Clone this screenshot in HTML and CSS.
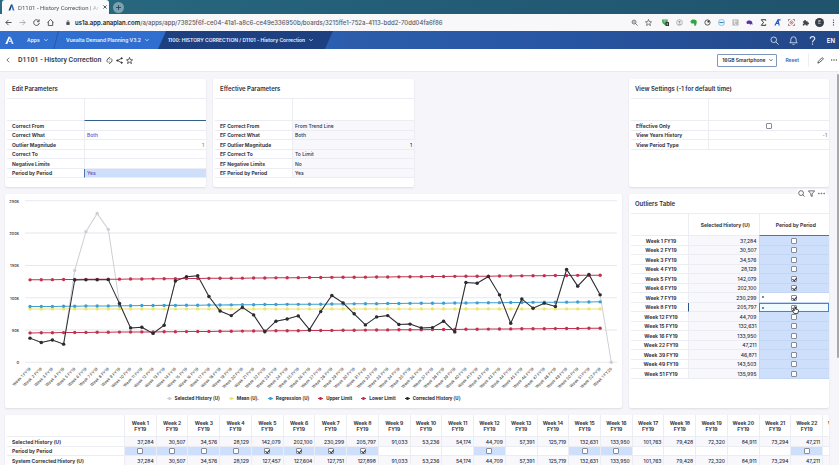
FILE: index.html
```html
<!DOCTYPE html>
<html lang="en">
<head>
<meta charset="utf-8">
<title>D1101 - History Correction | Anaplan</title>
<link rel="stylesheet" href="styles.css">
</head>
<body>
<div class="tabs">
  <div class="tab">
    <svg class="tab-logo" viewBox="0 0 14 14"><path d="M1 13 6 1h3L4.500 13z" fill="#1c3764"/><path d="M7 5 9 1l4 12h-3.500z" fill="#3f6fc4"/></svg>
    <span class="tab-title">D1101 - History Correction | An</span>
    <button class="tab-close" aria-label="Close tab"><svg viewBox="0 0 10 10"><path d="M1 1l8 8M9 1 1 9" stroke="#333" stroke-width="2"/></svg></button>
  </div>
  <button class="new-tab" aria-label="New tab"><svg viewBox="0 0 10 10"><path d="M5 0v10M0 5h10" stroke="#173d50" stroke-width="1.600"/></svg></button>
</div>

<div class="browser">
  <div class="browser-nav">
    <button aria-label="Back"><svg viewBox="0 0 16 16"><path d="M15 8H2M8 2 2 8l6 6"/></svg></button>
    <button aria-label="Forward" class="dim"><svg viewBox="0 0 16 16"><path d="M1 8h13M8 2l6 6-6 6"/></svg></button>
    <button aria-label="Reload"><svg viewBox="0 0 16 16"><path d="M13 4A6.500 6.500 0 1 0 14.500 9M14 1v5H9"/></svg></button>
    <button aria-label="Home"><svg viewBox="0 0 16 16"><path d="M1 8 8 1l7 7M3 7v8h10V7"/></svg></button>
  </div>
  <div class="address">
    <svg class="lock" viewBox="0 0 10 12"><rect x="1" y="5" width="8" height="7" fill="#444"/><path d="M3 5V3a2 2 0 0 1 4 0v2" fill="none" stroke="#444" stroke-width="1.500"/></svg>
    <span class="url"><b>us1a.app.anaplan.com</b>/a/apps/app/73825f6f-ce04-41a1-a8c6-ce49e336950b/boards/3215ffe1-752a-4113-bdd2-70dd04fa6f86</span>
  </div>
  <div class="extensions">
    <svg viewBox="0 0 16 16"><circle cx="7" cy="7" r="4.500" fill="none" stroke="#555" stroke-width="1.800"/><path d="m10 10 5 5M5 7h4" stroke="#555" stroke-width="1.800"/></svg>
    <svg class="bookmark" viewBox="0 0 16 16"><path d="m8 1 2 5 5 .5-4 3.500 1.500 5L8 12l-4.500 3L5 10 1 6.500 6 6z" fill="none" stroke="#444" stroke-width="1.500"/></svg>
    <svg viewBox="0 0 16 16"><path d="M0 1h13v8l-6 5-6-5z" fill="#3aa14c"/><path d="M3 4h7M4 7h5" stroke="#c4eccb" stroke-width="1.500"/><rect x="8" y="7" width="8" height="9" fill="#333"/><path d="M12 9v5" stroke="#fff" stroke-width="1.500"/></svg>
    <svg viewBox="0 0 16 16"><circle cx="8" cy="8" r="6.500" fill="none" stroke="#a9a9a9" stroke-width="2"/><circle cx="8" cy="6.500" r="2.500" fill="#999"/><path d="M4 13c1-4 7-4 8 0" fill="#aaa"/></svg>
    <svg viewBox="0 0 16 16"><path d="M1 5 5 1c4 0 9 0 10 3s0 9-2 11-4 0-3-2l-1-3c-4 1-8 0-8-5z" fill="#35a541"/></svg>
    <svg viewBox="0 0 16 16"><circle cx="8" cy="8" r="6" fill="none" stroke="#444" stroke-width="2"/><circle cx="10" cy="6" r="2.500" fill="#444"/></svg>
    <svg viewBox="0 0 16 16"><circle cx="8" cy="8" r="7" fill="#eaf6fc" stroke="#69acd0" stroke-width="1.500"/><path d="M3 8h10" stroke="#388abb" stroke-width="2.500"/></svg>
    <svg viewBox="0 0 16 16"><rect x="1" y="1" width="14" height="14" fill="#b9b9b9"/><path d="M6 3v8q0 2 4 1M4 5h7" fill="none" stroke="#f4f4f4" stroke-width="2"/></svg>
    <svg viewBox="0 0 16 16"><path d="M1 8c0-6 12-6 13-1l1 6-4-2-1 3-2-3C4 12 1 11 1 8z" fill="#5634a0"/></svg>
    <svg viewBox="0 0 16 16"><path d="M13 4V1.500H3L8 8l-5 6.500h10V12" fill="none" stroke="#333" stroke-width="2.200"/></svg>
    <svg viewBox="0 0 16 16"><path d="M2 15 9 2l3 13M4 10h7M10 2h5" fill="none" stroke="#2757c4" stroke-width="2.500"/></svg>
    <svg viewBox="0 0 16 16"><path d="M1 5V1h4M11 1h4v4M15 11v4h-4M5 15H1v-4" fill="none" stroke="#555" stroke-width="1.500"/><circle cx="8" cy="8" r="3.500" fill="none" stroke="#e05252" stroke-width="2"/><circle cx="8" cy="8" r="1.200" fill="#d33"/></svg>
    <svg viewBox="0 0 16 16"><path d="M2 5h3c-1-4 5-4 4 0h4v3c4-1 4 5 0 4v3H9c0-3-4-3-4 0H2v-4c3 0 3-3 0-3z" fill="#444"/></svg>
    <span class="avatar">E</span>
    <svg viewBox="0 0 16 16"><circle cx="8" cy="2.500" r="1.500" fill="#444"/><circle cx="8" cy="8" r="1.500" fill="#444"/><circle cx="8" cy="13.500" r="1.500" fill="#444"/></svg>
  </div>
</div>

<header class="appbar">
  <svg class="logo" viewBox="0 0 28 26"><path d="M1 24 11 1h6L7 24z" fill="#fff"/><path d="m15 8 3-6 9 22h-6l-2-6z" fill="#cfe0fa"/><path d="m11 18 5-5 3 5z" fill="#fff"/></svg>
  <nav class="crumbs">
    <a href="#" class="crumb crumb-apps">Apps <svg class="chev" viewBox="0 0 10 8"><path d="m1 2 4 4 4-4"/></svg></a>
    <a href="#" class="crumb crumb-model">Vuealta Demand Planning V3.2 <svg class="chev" viewBox="0 0 10 8"><path d="m1 2 4 4 4-4"/></svg></a>
    <a href="#" class="crumb crumb-page">1100: HISTORY CORRECTION / D1101 - History Correction <svg class="chev" viewBox="0 0 10 8"><path d="m1 2 4 4 4-4"/></svg></a>
  </nav>
  <div class="appbar-tools">
    <button aria-label="Search"><svg viewBox="0 0 24 24"><circle cx="10" cy="10" r="7.500"/><path d="m16 16 7 7"/></svg></button>
    <button aria-label="Notifications"><svg viewBox="0 0 24 24"><path d="M2 18c3-2 3-5 3-9a7 7 0 0 1 14 0c0 4 0 7 3 9zM9 21c1 3 5 3 6 0"/></svg></button>
    <button aria-label="Help"><svg viewBox="0 0 24 24"><path d="M6 7c0-7 12-7 12 0 0 4-6 4-6 10M12 20v3" stroke-width="3"/></svg></button>
    <button class="lang">EN</button>
  </div>
</header>

<div class="pagebar">
  <button class="back" aria-label="Back to list"><svg viewBox="0 0 10 16"><path d="M8 2 2 8l6 6"/></svg></button>
  <h1>D1101 - History Correction</h1>
  <div class="page-icons">
    <button aria-label="Refresh"><svg viewBox="0 0 16 16"><path d="M5 13a5.500 5.500 0 0 1 1-10M11 3a5.500 5.500 0 0 1-1 10M9 0 6 3l3 3M7 10l3 3-3 3"/></svg></button>
    <button aria-label="Share"><svg viewBox="0 0 16 16"><path d="M13 3 3 8l10 5"/><circle cx="13" cy="3" r="1.500" fill="#222"/><circle cx="3" cy="8" r="1.500" fill="#222"/><circle cx="13" cy="13" r="1.500" fill="#222"/></svg></button>
    <button aria-label="Favourite"><svg viewBox="0 0 16 16"><path d="m8 1 2 5 5 .5-4 3.500 1.500 5L8 12l-4.500 3L5 10 1 6.500 6 6z"/></svg></button>
  </div>
  <div class="page-actions">
    <button class="selector">16GB Smartphone <svg class="chev" viewBox="0 0 10 8"><path d="m1 2 4 4 4-4"/></svg></button>
    <a href="#" class="reset">Reset</a>
    <button class="edit" aria-label="Edit"><svg viewBox="0 0 16 16"><path d="m2 14 1-4 8-8q2-1 3 1t-1 3l-8 7z"/></svg></button>
    <button class="more" aria-label="More"><svg viewBox="0 0 16 16"><circle cx="2" cy="8" r="1"/><circle cx="8" cy="8" r="1"/><circle cx="14" cy="8" r="1"/></svg></button>
  </div>
</div>

<main class="board">
  <section class="card edit-card">
    <h2>Edit Parameters</h2>
    <table class="params editable">
      <thead><tr><th></th><th></th></tr></thead>
      <tbody>
        <tr><th>Correct From</th><td></td></tr>
        <tr><th>Correct What</th><td>Both</td></tr>
        <tr><th>Outlier Magnitude</th><td class="num">1</td></tr>
        <tr><th>Correct To</th><td></td></tr>
        <tr><th>Negative Limits</th><td></td></tr>
        <tr><th>Period by Period</th><td class="selected">Yes</td></tr>
      </tbody>
    </table>
  </section>

  <section class="card effective-card">
    <h2>Effective Parameters</h2>
    <table class="params readonly">
      <thead><tr><th></th><th></th></tr></thead>
      <tbody>
        <tr><th>EF Correct From</th><td>From Trend Line</td></tr>
        <tr><th>EF Correct What</th><td>Both</td></tr>
        <tr><th>EF Outlier Magnitude</th><td class="num">1</td></tr>
        <tr><th>EF Correct To</th><td>To Limit</td></tr>
        <tr><th>EF Negative Limits</th><td>No</td></tr>
        <tr><th>EF Period by Period</th><td>Yes</td></tr>
      </tbody>
    </table>
  </section>

  <section class="card settings-card">
    <h2>View Settings (-1 for default time)</h2>
    <table class="params settings">
      <thead><tr><th></th><th></th></tr></thead>
      <tbody>
        <tr><th><label for="effective-only">Effective Only</label></th><td class="mid"><input type="checkbox" id="effective-only"></td></tr>
        <tr><th>View Years History</th><td class="num">-1</td></tr>
        <tr><th>View Period Type</th><td></td></tr>
      </tbody>
    </table>
  </section>

  <section class="card chart-card">
    <svg id="chart" viewBox="0 0 616 198" role="img" aria-label="Weekly history"></svg>
    <ul class="legend">
      <li class="c-selected">Selected History (U)</li>
      <li class="c-mean">Mean (U).</li>
      <li class="c-regression">Regression (U)</li>
      <li class="c-limit">Upper Limit</li>
      <li class="c-limit">Lower Limit</li>
      <li class="c-corrected">Corrected History (U)</li>
    </ul>
  </section>

  <section class="card outliers-card">
    <div class="card-tools">
      <button aria-label="Find"><svg viewBox="0 0 16 16"><circle cx="7" cy="7" r="5.500"/><path d="m11 11 4 4"/></svg></button>
      <button aria-label="Filter"><svg viewBox="0 0 16 16"><path d="M1 2h14L9.500 8.500V15l-3-2V8.500z"/></svg></button>
      <button aria-label="Options"><svg viewBox="0 0 16 16"><circle cx="2" cy="8" r="1"/><circle cx="8" cy="8" r="1"/><circle cx="14" cy="8" r="1"/></svg></button>
    </div>
    <h2>Outliers Table</h2>
    <table class="outliers">
      <thead><tr><th></th><th>Selected History (U)</th><th>Period by Period</th></tr></thead>
      <tbody id="outliers"></tbody>
    </table>
    <svg class="cursor" viewBox="0 0 16 18"><path d="M5 17 1 10l2-1 2 2V2q1.500-2 3 0v5l5 1q2 0 2 3l-2 6z" fill="#fff" stroke="#222" stroke-width="1.800"/></svg>
  </section>

  <section class="card weeks-card">
    <table class="weeks">
      <thead><tr id="weeks-head"><th></th></tr></thead>
      <tbody>
        <tr id="weeks-selected"><th>Selected History (U)</th></tr>
        <tr id="weeks-period"><th>Period by Period</th></tr>
        <tr id="weeks-system"><th>System Corrected History (U)</th></tr>
      </tbody>
    </table>
  </section>
  <div class="scroll-thumb"></div>
</main>
<script src="board.js"></script>
</body>
</html>
```
FILE: styles.css
```css
* { box-sizing: border-box; }
body {
  margin: 0;
  height: 100vh;
  display: flex;
  flex-direction: column;
  overflow: hidden;
  background: #f5f5fa;
  color: #2c2f3d;
  font: 5px/9px Inter, "Open Sans", sans-serif;
}
button {
  display: flex;
  align-items: center;
  justify-content: center;
  padding: 0;
  border: 0;
  background: none;
  color: inherit;
  font: inherit;
}
a { color: inherit; text-decoration: none; }
svg { display: block; flex: none; }
h1, h2 { margin: 0; font-weight: 600; }

/* browser window */
.tabs {
  flex: none;
  height: 14px;
  display: flex;
  align-items: center;
  gap: 4px;
  padding-left: 2px;
  background: linear-gradient(90deg, #296b80, #235d78 50%, #20536c);
}
.tab {
  align-self: stretch;
  width: 107px;
  display: flex;
  align-items: center;
  gap: 3px;
  padding: 0 5px 0 6px;
  border-radius: 3px 3px 0 0;
  background: #f9fafb;
}
.tab-logo { width: 7px; height: 7px; }
.tab-title {
  flex: 1;
  font-family: Roboto, sans-serif;
  font-size: 6px;
  white-space: nowrap;
  color: #4c5157;
  mask-image: linear-gradient(90deg, #000 85%, transparent);
}
.tab-close svg { width: 4px; height: 4px; }
.new-tab { width: 11px; height: 11px; border-radius: 50%; background: #7ba2ae; }
.new-tab svg { width: 5px; height: 5px; }
.browser {
  flex: none;
  height: 17px;
  display: flex;
  align-items: center;
  background: #f8f8fa;
  color: #555;
}
.browser-nav { display: flex; gap: 7px; padding-left: 5px; }
.browser-nav svg { width: 7px; height: 7px; fill: none; stroke: #444; stroke-width: 2; }
.browser-nav .dim svg { stroke: #aaa; }
.address { flex: 1; display: flex; align-items: center; gap: 5px; padding-left: 12px; white-space: nowrap; }
.url { font-size: 6px; font-weight: 500; color: #5a5a5e; }
.url b { color: #222; font-weight: 600; }
.lock { width: 4px; height: 5px; }
.extensions { display: flex; align-items: center; gap: 7px; padding-right: 2px; }
.extensions svg { width: 7px; height: 7px; }
.extensions .bookmark { margin-right: 3px; }
.avatar {
  width: 9px;
  height: 9px;
  margin: 0 -1px;
  border-radius: 50%;
  background: #3c3c44;
  color: #ddd;
  text-align: center;
}

/* application bar */
.appbar {
  flex: none;
  height: 18px;
  display: flex;
  align-items: center;
  background: linear-gradient(90deg, #306fd0 0, #306fd0 18%, #2b5dab 42%, #2856a4 65%, #234786);
  color: #fff;
}
.logo { width: 9px; height: 9px; margin-left: 5px; }
.crumbs { flex: 1; align-self: stretch; display: flex; }
.crumb { display: flex; align-items: center; gap: 4px; font-weight: 600; color: #e8f0ff; white-space: nowrap; }
.crumb-apps { width: 48px; padding-left: 13px; background: linear-gradient(105deg, transparent 42px, #2558aa 43px, transparent 44px); }
.crumb-model { width: 96px; padding-left: 4px; }
.crumb-page {
  width: 175px;
  padding-left: 10px;
  background: #1f4080;
  clip-path: polygon(8px 0, 100% 0, calc(100% - 8px) 100%, 0 100%);
}
.chev { width: 4px; height: 4px; fill: none; stroke: currentColor; stroke-width: 2; }
.appbar-tools { display: flex; gap: 10px; padding-right: 4px; }
.appbar-tools svg { width: 9px; height: 9px; fill: none; stroke: #dce7fa; stroke-width: 2.2; }
.lang { font-weight: 600; font-size: 6px; }

/* page bar */
.pagebar {
  flex: none;
  height: 23px;
  display: flex;
  align-items: center;
  border-bottom: 1px solid #e9e9ef;
  background: #fff;
}
.back { width: 4px; margin: 0 8px 0 6px; }
.pagebar svg { fill: none; stroke: #333; stroke-width: 1.8; }
.back svg { width: 4px; height: 6px; }
h1 { font-family: Roboto, sans-serif; font-size: 7px; font-weight: 500; }
.page-icons { display: flex; gap: 3px; padding-left: 5px; }
.page-icons svg { width: 7px; height: 7px; }
.page-actions { flex: 1; display: flex; align-items: center; justify-content: flex-end; padding-right: 2px; }
.selector {
  width: 60px;
  height: 13px;
  gap: 3px;
  border: 1px solid #7d97bd;
  border-radius: 1px;
  font-weight: 600;
  white-space: nowrap;
}
.reset { margin: 0 9px 0 8px; color: #2f66b5; font-weight: 600; }
.edit { height: 14px; padding-left: 8px; border-left: 1px solid #eee; }
.edit svg { width: 7px; height: 7px; }
.more { margin-left: 7px; }
.more svg { width: 6px; height: 6px; }

/* board */
.board {
  flex: 1;
  min-height: 0;
  position: relative;
  display: grid;
  grid-template-columns: 201fr 201fr 201fr 200fr;
  grid-template-rows: 108px 214px 60px;
  gap: 7px;
  padding: 7px 10px 0 5px;
}
.card { position: relative; min-width: 0; background: #fff; border-radius: 2px; box-shadow: 0 1px 2px #dcdce4; }
.settings-card, .outliers-card { grid-column: 4; }
.chart-card { grid-column: 1 / 4; }
.weeks-card { grid-column: 1 / 5; overflow: hidden; }
h2 { height: 19px; padding-left: 7px; font-size: 6px; line-height: 19px; }
.settings-card h2, .outliers-card h2 { padding-left: 6px; }

table { width: calc(100% - 2px); margin-left: 2px; table-layout: fixed; border-collapse: separate; border-spacing: 0; }
th, td { height: 10px; padding: 0 2px 0 5px; border-bottom: 1px solid #ececf3; line-height: 8px; white-space: nowrap; }
tbody tr:nth-child(even) > * { height: 9px; }
th { text-align: left; font-weight: 700; color: #353845; }
td { border-left: 1px solid #ececf3; padding-left: 2px; font-weight: 500; }
thead th { height: 22px; text-align: center; border-top: 1px solid #ececf3; }
thead th + th { border-left: 1px solid #ececf3; }
.params thead th:first-child { width: 77px; }
.params thead th { height: 23px; }
.num { text-align: right; }
.mid { text-align: center; }
.editable td { color: #6b4fb8; }
.editable thead th + th { border-bottom: 1px solid #31608f; }
.editable .num, .settings .num { color: #888; }
.editable td.selected { background: #cddffa; border-left-color: #4774b5; }
.readonly td { background: #f8f8fc; }

input[type="checkbox"] {
  appearance: none;
  display: block;
  width: 6px;
  height: 6px;
  margin: 0 auto;
  border: 1px solid #858b98;
  border-radius: 1px;
  background: #fff;
}
input[type="checkbox"]:checked::before {
  content: "";
  display: block;
  width: 2px;
  height: 3px;
  margin-left: 1px;
  border: solid #333;
  border-width: 0 1px 1px 0;
  transform: rotate(40deg);
}

.chart-card { display: flex; flex-direction: column; }
#chart { width: 100%; height: auto; }
#chart text { font-size: 4px; font-weight: 500; fill: #333; }
#chart .weekday { fill: #555; }
.grid-line { stroke: #e8e8ee; }
.series { fill: none; stroke: currentColor; stroke-width: 1; }
.dot { fill: currentColor; }
.c-selected { color: #cfced4; }
.c-mean { color: #eee46e; }
.c-regression { color: #3c9fd2; }
.c-limit { color: #c2324e; }
.c-corrected { color: #2c2c30; }
.legend { display: flex; justify-content: center; gap: 9px; margin: 0; padding: 2px 0 0; list-style: none; font-family: Roboto, sans-serif; font-weight: 700; }
.legend li { display: flex; align-items: center; gap: 3px; -webkit-text-fill-color: #333; white-space: nowrap; }
.legend li::before {
  content: "";
  width: 5px;
  height: 3px;
  background: radial-gradient(circle, currentColor 1px, transparent 2px), linear-gradient(currentColor, currentColor) center / 100% 1px no-repeat;
}

.card-tools { position: absolute; top: -5px; right: 3px; z-index: 1; display: flex; gap: 3px; padding: 1px; background: #fff; border-radius: 2px; }
.card-tools svg { width: 7px; height: 7px; fill: none; stroke: #333; stroke-width: 1.6; }
.outliers thead th:first-child { width: 57px; }
.outliers thead th + th + th { border-bottom: 1px solid #3f78c0; }
.outliers thead th { height: 23px; }
.outliers tbody th { text-align: center; }
.outliers td:nth-child(2) { background: #f8f8fc; }
.outliers td.check { position: relative; padding: 0; background: #cddffa; border-color: #c3d6f3; }
.outliers td.changed { background: #fff; }
.outliers td.active { background: #effbff; border: 1px solid #4a83c6; }
.outliers tr.current td:nth-child(2) { border-left: 1px solid #2d5488; }
.changed::before { content: ""; position: absolute; top: 3px; left: 2px; width: 2px; height: 2px; border-radius: 50%; background: #35679b; }
.cursor { position: absolute; right: 30px; bottom: 94px; width: 7px; height: 8px; }

.weeks { width: 847px; }
.weeks thead th { padding: 0 2px; line-height: 6px; white-space: normal; border-top: 0; }
.weeks thead th:first-child { width: 117px; }
.weeks td { text-align: right; background: #fff; }
#weeks-selected td, #weeks-system td { background: #f8f8fc; }
#weeks-period .check { background: #cddffa; }

.scroll-thumb { position: absolute; top: 2px; right: 0; width: 2px; height: 284px; background: #a7a7ae; border-radius: 1px; }
```
FILE: board.js
```js
const corrected = [37.3, 30.5, 34.6, 28.1, 127.5, 127.6, 127.8, 127.9, 91, 53.2, 54.2, 44.7, 57.4, 125.7, 132.6, 134,
  101.8, 79.4, 72.3, 84.9, 73.3, 47.2, 63.5, 67, 71.8, 50.6, 78.5, 103.3, 92, 75, 57.8, 70.2, 72.3, 58.4, 59, 53.2,
  53.7, 63.5, 46.9, 123.4, 122.4, 132.7, 104.3, 60.4, 98, 83.7, 91.4, 86.3, 143.5, 117.8, 136, 104.3];
const selected = corrected.slice();
selected.splice(4, 4, 142.1, 202.1, 230.3, 205.8);
selected.push(0);

const ramp = (from, to) => Array.from({ length: 52 }, (_, i) => from + (to - from) * i / 51);
const px = i => (25 + i * 11.16).toFixed(1);
const py = v => (168 - v * 0.645).toFixed(1);
const series = (values, cls) => `<g class="${cls}"><polyline class="series" points="${values.map((v, i) => px(i) + ',' + py(v)).join(' ')}"/>` +
  values.map((v, i) => `<circle class="dot" cx="${px(i)}" cy="${py(v)}" r="1.7"/>`).join('') + '</g>';

let chart = '';
for (let v = 0; v <= 250; v += 50) {
  chart += `<line class="grid-line" x1="20" x2="611" y1="${py(v)}" y2="${py(v)}"/>` +
    `<text x="14" y="${+py(v) + 2}" text-anchor="end">${v ? v + 'k' : 0}</text>`;
}
for (let i = 0; i < 53; i++) {
  const name = i < 52 ? `Week ${i + 1} FY19` : 'Week 1 FY20';
  chart += `<text class="weekday" text-anchor="end" transform="translate(${+px(i) + 1} 175) rotate(-45)">${name}</text>`;
}
chart += series(selected, 'c-selected') + series(ramp(82.6, 82.6), 'c-mean') + series(ramp(86.3, 93.5), 'c-regression') +
  series(ramp(127.6, 134.8), 'c-limit') + series(ramp(45.5, 52.7), 'c-limit') + series(corrected, 'c-corrected');
document.getElementById('chart').innerHTML = chart;

const box = (label, on) => `<input type="checkbox" aria-label="${label}"${on ? ' checked' : ''}>`;
const outliers = [[1, '37,284'], [2, '30,507'], [3, '34,576'], [4, '28,129'], [5, '142,079'], [6, '202,100'], [7, '230,299'],
  [8, '205,797'], [12, '44,709'], [15, '132,631'], [16, '133,950'], [22, '47,211'], [39, '46,871'], [49, '143,503'], [51, '135,995']];
document.getElementById('outliers').innerHTML = outliers.map(([week, value]) => {
  const state = week === 8 ? ' changed active' : week === 7 ? ' changed' : '';
  return `<tr${week === 8 ? ' class="current"' : ''}><th>Week ${week} FY19</th><td class="num">${value}</td>` +
    `<td class="check${state}">${box('Week ' + week, week > 4 && week < 9)}</td></tr>`;
}).join('');

const history = ['37,284', '30,507', '34,576', '28,129', '142,079', '202,100', '230,299', '205,797', '91,033', '53,236', '54,174',
  '44,709', '57,391', '125,719', '132,631', '133,950', '101,763', '79,428', '72,320', '84,911', '73,294', '47,211', ''];
const system = history.slice();
system.splice(4, 4, '127,457', '127,604', '127,751', '127,898');
const flagged = outliers.map(row => row[0]);
const add = (id, html) => document.getElementById(id).insertAdjacentHTML('beforeend', html);
history.forEach((value, i) => {
  const week = i + 1;
  add('weeks-head', `<th>Week ${week}<br>FY19</th>`);
  add('weeks-selected', `<td>${value}</td>`);
  add('weeks-period', flagged.includes(week) ? `<td class="check">${box('Period week ' + week, week > 4 && week < 9)}</td>` : '<td></td>');
  add('weeks-system', `<td>${system[i]}</td>`);
});
```
